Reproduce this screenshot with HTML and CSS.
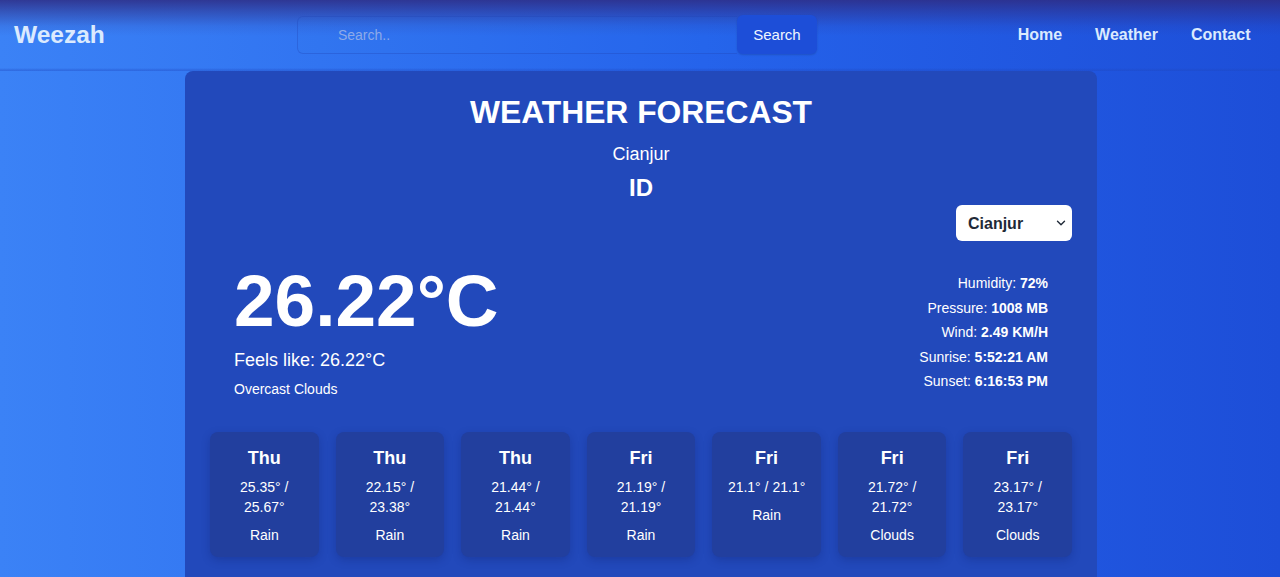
FILE: index.html
```html
<!DOCTYPE html>
<html lang="en">
<head>
<meta charset="utf-8">
<title>Weezah</title>
<link rel="stylesheet" href="styles.css">
</head>
<body>
<header class="topbar">
  <div class="logo">Weezah</div>
  <form class="search">
    <input class="search-input" type="text" placeholder="Search..">
    <button class="search-btn" type="button">Search</button>
  </form>
  <nav class="nav">
    <a href="#">Home</a>
    <a href="#">Weather</a>
    <a href="#">Contact</a>
  </nav>
</header>

<main class="card">
  <h1 class="title">WEATHER FORECAST</h1>
  <p class="city">Cianjur</p>
  <p class="country">ID</p>

  <div class="select-row">
    <div class="select-wrap">
      <select class="city-select">
        <option>Cianjur</option>
      </select>
      <svg class="chev" width="10" height="6" viewBox="0 0 10 6"><path d="M1.5 1.2l3.5 3.5 3.5-3.5" fill="none" stroke="#1f2937" stroke-width="1.4" stroke-linecap="round" stroke-linejoin="round"/></svg>
    </div>
  </div>

  <section class="now">
    <div class="now-left">
      <div class="temp">26.22°C</div>
      <div class="feels">Feels like: 26.22°C</div>
      <div class="desc">Overcast Clouds</div>
    </div>
    <ul class="details">
      <li>Humidity: <b>72%</b></li>
      <li>Pressure: <b>1008 MB</b></li>
      <li>Wind: <b>2.49 KM/H</b></li>
      <li>Sunrise: <b>5:52:21 AM</b></li>
      <li>Sunset: <b>6:16:53 PM</b></li>
    </ul>
  </section>

  <section class="forecast">
    <div class="day"><div class="d">Thu</div><div class="t">25.35° / 25.67°</div><div class="c">Rain</div></div>
    <div class="day"><div class="d">Thu</div><div class="t">22.15° / 23.38°</div><div class="c">Rain</div></div>
    <div class="day"><div class="d">Thu</div><div class="t">21.44° / 21.44°</div><div class="c">Rain</div></div>
    <div class="day"><div class="d">Fri</div><div class="t">21.19° / 21.19°</div><div class="c">Rain</div></div>
    <div class="day"><div class="d">Fri</div><div class="t">21.1° / 21.1°</div><div class="c">Rain</div></div>
    <div class="day"><div class="d">Fri</div><div class="t">21.72° / 21.72°</div><div class="c">Clouds</div></div>
    <div class="day"><div class="d">Fri</div><div class="t">23.17° / 23.17°</div><div class="c">Clouds</div></div>
  </section>
</main>
</body>
</html>
```

FILE: styles.css
```css
* { box-sizing: border-box; }
html, body { margin: 0; padding: 0; }
html { background: #2563eb; }
body {
  font-family: "Liberation Sans", Arial, sans-serif;
  color: #fff;
  background: linear-gradient(90deg, #3b82f6 0%, #2563eb 55%, #1d4ed8 100%);
  min-height: 577px;
}

.topbar {
  height: 71px;
  display: flex;
  align-items: center;
  justify-content: space-between;
  padding: 0 13px 1px 14px;
  background:
    linear-gradient(180deg, rgba(40,80,200,0) 68px, rgba(30,70,190,0.35) 70px, rgba(30,70,190,0.35) 71px),
    linear-gradient(180deg, rgba(46,44,132,0.85) 0px, rgba(46,44,132,0.5) 12px, rgba(46,44,132,0.12) 26px, rgba(46,44,132,0) 36px);
}
.logo {
  font-size: 24.5px;
  font-weight: 700;
  color: #dbeafe;
  padding-bottom: 1px;
}
.search {
  display: flex;
  width: 520px;
  height: 39px;
  margin-left: 8px;
  margin-bottom: 2px;
}
.search-input {
  flex: 1;
  min-width: 0;
  height: 38px;
  margin-top: 1px;
  border: 1px solid rgba(30,64,175,0.3);
  border-right: none;
  border-radius: 6px 0 0 6px;
  background: rgba(59,130,246,0.06);
  padding: 0 12px 0 40px;
  font-family: inherit;
  font-size: 14px;
  color: #fff;
  outline: none;
}
.search-input::placeholder { color: #8eaae8; }
.search-btn {
  width: 80px;
  height: 39px;
  border: none;
  border-radius: 6px;
  background: #1d4ed8;
  color: #f0f6ff;
  font-family: inherit;
  font-size: 15px;
  box-shadow: 0 1px 2px rgba(0,0,0,0.15);
}
.nav { display: flex; }
.nav a {
  padding: 0 16.5px;
  color: #dbeafe;
  text-decoration: none;
  font-weight: 700;
  font-size: 16px;
}

.card {
  width: 912px;
  margin: 0 0 0 calc(50% - 455px);
  background: #2249bb;
  border-radius: 8px 8px 0 0;
  padding: 23px 25px 24px;
}
.title {
  margin: 0;
  text-align: center;
  font-size: 31.8px;
  line-height: 36px;
  font-weight: 700;
}
.city {
  margin: 10px 0 0;
  text-align: center;
  font-size: 18px;
  line-height: 28px;
}
.country {
  margin: 4px 0 0;
  text-align: center;
  font-size: 24px;
  line-height: 32px;
  font-weight: 700;
}
.select-row {
  display: flex;
  justify-content: flex-end;
  margin-top: 1px;
}
.select-wrap { position: relative; }
.city-select {
  appearance: none;
  -webkit-appearance: none;
  width: 116px;
  height: 36px;
  border: none;
  border-radius: 6px;
  background: #fff;
  color: #1f2937;
  font-family: inherit;
  font-size: 16px;
  font-weight: 700;
  padding: 0 12px;
}
.chev {
  position: absolute;
  right: 6px;
  top: 15px;
  pointer-events: none;
}

.now {
  display: flex;
  justify-content: space-between;
  align-items: flex-start;
  padding: 0 24px;
  margin-top: 24px;
}
.temp {
  font-size: 73px;
  line-height: 72px;
  font-weight: 700;
}
.feels {
  margin-top: 10px;
  font-size: 18px;
  line-height: 26px;
}
.desc {
  margin-top: 6px;
  font-size: 14px;
  line-height: 20px;
}
.details {
  list-style: none;
  margin: 0;
  padding: 6px 0 0;
  text-align: right;
  font-size: 14px;
  line-height: 24.5px;
}

.forecast {
  display: grid;
  grid-template-columns: repeat(7, 1fr);
  gap: 17px;
  margin-top: 33px;
}
.day {
  background: #223f9e;
  border-radius: 8px;
  padding: 13px 14px 12px;
  text-align: center;
  box-shadow: 0 3px 8px rgba(10,25,90,0.25);
}
.d {
  font-size: 18px;
  line-height: 27px;
  font-weight: 700;
}
.t {
  margin-top: 5px;
  font-size: 14px;
  line-height: 20px;
}
.c {
  margin-top: 8px;
  font-size: 14px;
  line-height: 20px;
}
```
